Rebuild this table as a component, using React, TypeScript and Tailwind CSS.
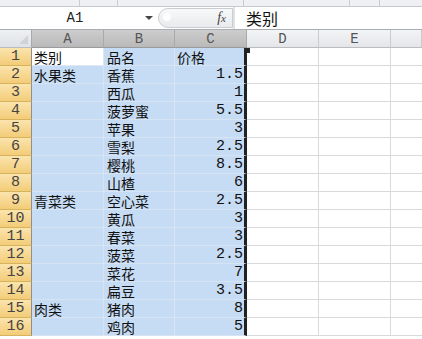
import React from 'react';

type Row = { cat?: string; name: string; price: string };

const rows: Row[] = [
  { cat: '水果类', name: '香蕉', price: '1.5' },
  { name: '西瓜', price: '1' },
  { name: '菠萝蜜', price: '5.5' },
  { name: '苹果', price: '3' },
  { name: '雪梨', price: '2.5' },
  { name: '樱桃', price: '8.5' },
  { name: '山楂', price: '6' },
  { cat: '青菜类', name: '空心菜', price: '2.5' },
  { name: '黄瓜', price: '3' },
  { name: '春菜', price: '3' },
  { name: '菠菜', price: '2.5' },
  { name: '菜花', price: '7' },
  { name: '扁豆', price: '3.5' },
  { cat: '肉类', name: '猪肉', price: '8' },
  { name: '鸡肉', price: '5' },
];

const cjk = "font-['Noto_Sans_CJK_SC',sans-serif] leading-none";
const mono = "font-['Liberation_Mono',monospace] leading-none";

const RowHead = ({ n }: { n: number }) => (
  <div
    className={`w-[32px] shrink-0 h-full flex items-center justify-center border-r border-r-[#8f8f8f] border-b border-b-[#d6b35f] bg-gradient-to-b from-[#fbe4ad] to-[#f3cc77] text-[15px] text-[#444] ${mono}`}
  >
    {n}
  </div>
);

const ColHead = ({ label, active, w }: { label: string; active?: boolean; w: string }) => (
  <div
    className={`${w} shrink-0 h-full flex items-center justify-center border-r text-[14px] ${mono} ${
      active
        ? 'bg-gradient-to-b from-[#cdcdcd] to-[#b9b9b9] border-r-[#a9a9a9] text-[#555] border-b border-b-[#9a9a9a]'
        : 'bg-gradient-to-b from-[#f3f4f6] to-[#e4e6e9] border-r-[#c9cbcf] text-[#555] border-b border-b-[#b9bcc1]'
    }`}
  >
    {label}
  </div>
);

export default function App() {
  return (
    <div className="w-[422px] h-[339px] overflow-hidden bg-white select-none">
      {/* ribbon strip */}
      <div className="h-[7px] bg-[#eef0f3] border-b border-[#c5c9cf] flex">
        <div className="w-[80px] border-r border-[#c9ccd1]" />
        <div className="w-[38px] border-r border-[#c9ccd1]" />
        <div className="w-[126px] border-r border-[#c9ccd1]" />
        <div className="w-[106px] border-r border-[#c9ccd1]" />
        <div className="w-[30px] border-r border-[#c9ccd1]" />
      </div>

      {/* formula bar */}
      <div className="h-[23px] flex items-stretch border-b border-[#a9adb3] bg-white">
        <div className="w-[140px] flex items-center justify-center">
          <span className={`text-[14px] text-[#222] pl-[10px] ${mono}`}>A1</span>
        </div>
        <div className="w-[18px] flex items-center justify-center">
          <div className="w-0 h-0 border-l-[4px] border-r-[4px] border-t-[4px] border-l-transparent border-r-transparent border-t-[#444]" />
        </div>
        <div className="w-[75px] my-[1px] rounded-l-full border border-[#c9ccd1] bg-gradient-to-b from-[#f8f9fa] to-[#e8eaed] flex items-center justify-end pr-[6px] relative">
          <div className="absolute left-[4px] top-[4px] w-[8px] h-[8px] rounded-full bg-white/90" />
          <span className="font-['Liberation_Serif',serif] italic text-[14px] text-[#444] leading-none">
            f<span className="text-[11px]">x</span>
          </span>
        </div>
        <div className="w-[2px] bg-[#dfe1e4]" />
        <div className={`flex-1 flex items-center pl-[11px] text-[16px] text-[#111] ${cjk}`}>类别</div>
      </div>

      {/* column headers */}
      <div className="h-[18px] flex">
        <div className="w-[32px] shrink-0 h-full bg-gradient-to-b from-[#eef0f3] to-[#dfe2e6] border-r border-r-[#a9a9a9] border-b border-b-[#b9bcc1] flex items-end justify-end p-[3px]">
          <svg width="9" height="9" viewBox="0 0 9 9">
            <path d="M9 0 L9 9 L0 9 Z" fill="#cfd2d6" />
          </svg>
        </div>
        <ColHead label="A" active w="w-[72px]" />
        <ColHead label="B" active w="w-[71px]" />
        <ColHead label="C" active w="w-[72px]" />
        <ColHead label="D" w="w-[72px]" />
        <ColHead label="E" w="w-[72px]" />
        <ColHead label="" w="flex-1" />
      </div>

      {/* sheet body */}
      <div className="flex flex-col relative">
        {[{ cat: '类别', name: '品名', price: '价格' } as Row, ...rows].map((r, i) => {
          const head = i === 0;
          return (
            <div key={i} className="h-[18px] flex">
              <RowHead n={i + 1} />
              <div
                className={`w-[72px] shrink-0 flex items-center pl-[2px] border-r border-b text-[14px] text-[#111] ${cjk} ${
                  head ? 'bg-white border-[#dfe7f2]' : 'bg-[#c6dcf4] border-[#d6e4f4]'
                }`}
              >
                {r.cat}
              </div>
              <div className={`w-[71px] shrink-0 flex items-center pl-[3px] bg-[#c6dcf4] border-r border-b border-[#d6e4f4] text-[14px] text-[#111] ${cjk}`}>
                {r.name}
              </div>
              <div
                className={`w-[72px] shrink-0 flex items-center bg-[#c6dcf4] border-b border-[#d6e4f4] text-[#111] border-r-[3px] border-r-[#222] ${
                  head ? `pl-[2px] text-[14px] ${cjk}` : `justify-end pr-[1px] text-[15px] ${mono}`
                }`}
              >
                {r.price}
              </div>
              <div className="w-[72px] shrink-0 border-r border-b border-[#d9d9d9]" />
              <div className="w-[72px] shrink-0 border-r border-b border-[#d9d9d9]" />
              <div className="flex-1 border-b border-[#d9d9d9]" />
            </div>
          );
        })}
        {/* selection handle */}
        <div className="absolute left-[244px] top-0 w-[6px] h-[5px] bg-[#222]" />
      </div>
    </div>
  );
}
